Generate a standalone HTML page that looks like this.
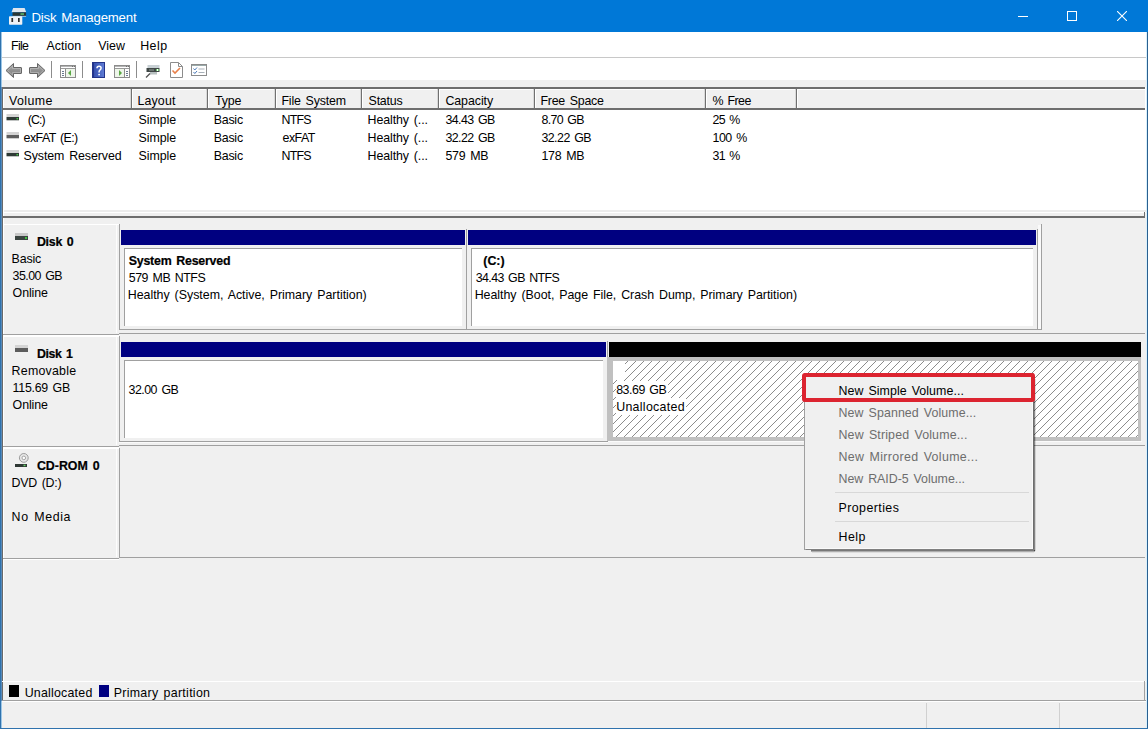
<!DOCTYPE html>
<html><head><meta charset="utf-8"><style>
html,body{margin:0;padding:0;width:1148px;height:729px;overflow:hidden;background:#f0f0f0}
body>div,body>svg{position:absolute}
.t{position:absolute;white-space:pre;font-family:"Liberation Sans",sans-serif;}
</style></head><body>
<div style="left:0px;top:0px;width:1148px;height:729px;background:#f0f0f0"></div>
<div style="left:0px;top:0px;width:1148px;height:32px;background:#0078d7"></div>
<div class="t" style="left:31.40px;top:11px;font-size:13.2px;line-height:13.2px;letter-spacing:-0.187px;word-spacing:1.5px;color:#ffffff;">Disk Management</div>
<svg style="left:9px;top:8px" width="19" height="18" viewBox="0 0 19 18">
<path d="M2.5 4.3 L4.2 0 H15.6 L17.2 4.3 Z" fill="#dfe6ee"/>
<rect x="3.5" y="4.3" width="13.6" height="3.6" fill="#2a3634"/>
<rect x="11.5" y="5.3" width="3.5" height="1.5" fill="#5cc070"/>
<rect x="3.5" y="7.9" width="13.6" height="0.8" fill="#bcd4ea"/>
<rect x="0" y="8.2" width="13.3" height="8.6" rx="0.8" fill="#eef1f5"/>
<rect x="2.4" y="10" width="1.7" height="4" fill="#2e2e2e"/>
<rect x="9" y="10" width="1.7" height="4" fill="#2e2e2e"/>
</svg>
<div style="left:1018px;top:16px;width:10px;height:1px;background:#fff"></div>
<div style="left:1067px;top:11px;width:8px;height:8px;border:1px solid #fff"></div>
<svg style="left:1117px;top:11px" width="10" height="10" viewBox="0 0 10 10"><path d="M0 0 L10 10 M10 0 L0 10" stroke="#fff" stroke-width="1.1"/></svg>
<div style="left:1px;top:32px;width:1146px;height:26px;background:#fff"></div>
<div style="left:1px;top:57px;width:1146px;height:1px;background:#c8c8c8"></div>
<div class="t" style="left:11.00px;top:40px;font-size:12.4px;line-height:12.4px;letter-spacing:-0.658px;color:#000;">File</div>
<div class="t" style="left:46.50px;top:40px;font-size:12.4px;line-height:12.4px;letter-spacing:0.051px;color:#000;">Action</div>
<div class="t" style="left:98.30px;top:40px;font-size:12.4px;line-height:12.4px;letter-spacing:0.005px;color:#000;">View</div>
<div class="t" style="left:140.20px;top:40px;font-size:12.4px;line-height:12.4px;letter-spacing:0.469px;color:#000;">Help</div>
<div style="left:1px;top:58px;width:1146px;height:22px;background:#fff"></div>
<div style="left:1px;top:80px;width:1146px;height:8px;background:#f0f0f0"></div>
<svg style="left:5px;top:62px" width="19" height="17" viewBox="0 0 19 17">
<defs><linearGradient id="ga" x1="0" y1="0" x2="0" y2="1"><stop offset="0" stop-color="#a8a8a8"/><stop offset="1" stop-color="#7a7a7a"/></linearGradient></defs>
<path d="M1 8.5 L8.5 1.5 V5.5 H16 Q16.5 5.5 16.5 6 V11 Q16.5 11.5 16 11.5 H8.5 V15.5 Z" fill="url(#ga)" stroke="#666" stroke-width="1"/>
<path d="M2.6 8.5 L7.5 4 V6.5 H15.5 V10.5 H7.5 V13 Z" fill="none" stroke="#c4c4c4" stroke-width="0.6"/>
</svg>
<svg style="left:28px;top:62px" width="19" height="17" viewBox="0 0 19 17">
<path d="M17 8.5 L9.5 1.5 V5.5 H2 Q1.5 5.5 1.5 6 V11 Q1.5 11.5 2 11.5 H9.5 V15.5 Z" fill="url(#ga)" stroke="#666" stroke-width="1"/>
<path d="M15.4 8.5 L10.5 4 V6.5 H2.5 V10.5 H10.5 V13 Z" fill="none" stroke="#c4c4c4" stroke-width="0.6"/>
</svg>
<div style="left:51px;top:61px;width:1px;height:17px;background:#8c8c8c"></div>
<div style="left:82px;top:61px;width:1px;height:17px;background:#8c8c8c"></div>
<div style="left:136px;top:61px;width:1px;height:17px;background:#8c8c8c"></div>
<svg style="left:59px;top:64px" width="18" height="15" viewBox="0 0 18 15" shape-rendering="crispEdges">
<rect x="1" y="1" width="16" height="13" fill="#8c8c8c"/>
<rect x="2" y="2" width="14" height="11" fill="#fff"/>
<rect x="2" y="2" width="14" height="1" fill="#b4b4b4"/>
<rect x="13" y="2" width="1" height="1" fill="#707070"/><rect x="15" y="2" width="1" height="1" fill="#707070"/>
<rect x="2" y="4" width="14" height="1" fill="#9a9a9a"/>
<rect x="6" y="5" width="1" height="8" fill="#8c8c8c"/>
<rect x="3" y="7" width="2" height="1" fill="#6a7a90"/><rect x="3" y="9" width="2" height="1" fill="#6a7a90"/><rect x="3" y="11" width="2" height="1" fill="#6a7a90"/>
<rect x="7" y="5" width="9" height="8" fill="#eef6ea"/>
<path d="M9 9 L12 6 V12 Z" fill="#5aa845" shape-rendering="auto"/>
</svg>
<svg style="left:92px;top:62px" width="13" height="16" viewBox="0 0 13 16">
<defs><linearGradient id="gh" x1="0" y1="0" x2="1" y2="0"><stop offset="0" stop-color="#3048a8"/><stop offset="1" stop-color="#6280d8"/></linearGradient></defs>
<rect x="0" y="0" width="13" height="16" fill="url(#gh)"/>
<rect x="0" y="0" width="2" height="16" fill="#22338c"/>
<rect x="0.5" y="0.5" width="12" height="15" fill="none" stroke="#24348a" stroke-width="1"/>
<path d="M5 6.2 Q5 4.2 7.1 4.2 Q9.1 4.2 9.1 6.1 Q9.1 7.4 7.9 8.1 Q7.1 8.6 7.1 9.8 V10.6" fill="none" stroke="#fff" stroke-width="1.5"/>
<circle cx="7.1" cy="12.6" r="0.95" fill="#fff"/>
</svg>
<svg style="left:113px;top:64px" width="18" height="15" viewBox="0 0 18 15" shape-rendering="crispEdges">
<rect x="1" y="1" width="16" height="13" fill="#8c8c8c"/>
<rect x="2" y="2" width="14" height="11" fill="#fff"/>
<rect x="2" y="2" width="14" height="1" fill="#b4b4b4"/>
<rect x="13" y="2" width="1" height="1" fill="#707070"/><rect x="15" y="2" width="1" height="1" fill="#707070"/>
<rect x="2" y="4" width="14" height="1" fill="#9a9a9a"/>
<rect x="11" y="5" width="1" height="8" fill="#8c8c8c"/>
<rect x="13" y="7" width="2" height="1" fill="#6a7a90"/><rect x="13" y="9" width="2" height="1" fill="#6a7a90"/><rect x="13" y="11" width="2" height="1" fill="#6a7a90"/>
<rect x="2" y="5" width="9" height="8" fill="#eef6ea"/>
<path d="M9 9 L6 6 V12 Z" fill="#5aa845" shape-rendering="auto"/>
</svg>
<svg style="left:145px;top:64px" width="16" height="14" viewBox="0 0 16 14">
<rect x="2.5" y="1" width="12" height="3" fill="#c8d0d4"/>
<rect x="1.5" y="4" width="13" height="4" fill="#404846"/>
<rect x="4" y="5" width="5" height="2" fill="#6a7270"/>
<rect x="11" y="5" width="3" height="2" fill="#6ac86a"/>
<rect x="12" y="5" width="1" height="2" fill="#fff"/>
<rect x="5" y="8" width="7" height="2.5" fill="#b8c0c0"/>
<path d="M5 9.5 L1 13.5" stroke="#505050" stroke-width="1.3"/>
</svg>
<svg style="left:170px;top:62px" width="13" height="16" viewBox="0 0 13 16">
<path d="M0.5 0.5 H8.5 L12.5 4.5 V15.5 H0.5 Z" fill="#fff" stroke="#8c8c8c"/>
<path d="M8.5 0.5 V4.5 H12.5" fill="none" stroke="#8c8c8c"/>
<path d="M2.5 8.5 L5 11 L10 6" fill="none" stroke="#e8804a" stroke-width="1.6"/>
</svg>
<svg style="left:191px;top:64px" width="16" height="12" viewBox="0 0 16 12">
<rect x="0.5" y="0.5" width="15" height="11" fill="#fff" stroke="#8c8c8c"/>
<rect x="1" y="1" width="14" height="1" fill="#9aa"/>
<path d="M2.5 4.5 L3.8 6 L6 3.5 M2.5 8 L3.8 9.5 L6 7" fill="none" stroke="#4a7ab8" stroke-width="1"/>
<rect x="7.5" y="4.5" width="6" height="1" fill="#a8b0b8"/><rect x="7.5" y="8" width="6" height="1" fill="#a8b0b8"/>
</svg>
<div style="left:2px;top:87px;width:1144px;height:126px;background:#fff"></div>
<div style="left:2px;top:87px;width:1143px;height:2px;background:#6e6e6e"></div>
<div style="left:2px;top:87px;width:1px;height:126px;background:#6a6a6a"></div>
<div style="left:3px;top:89px;width:1142px;height:19px;background:#f0f0f0"></div>
<div style="left:3px;top:89px;width:1142px;height:1px;background:#fff"></div>
<div style="left:3px;top:108px;width:1142px;height:2px;background:#6e6e6e"></div>
<div style="left:130px;top:89px;width:1px;height:19px;background:#d8d8d8"></div>
<div style="left:131px;top:89px;width:1px;height:19px;background:#707070"></div>
<div style="left:132px;top:89px;width:1px;height:19px;background:#fff"></div>
<div style="left:206px;top:89px;width:1px;height:19px;background:#d8d8d8"></div>
<div style="left:207px;top:89px;width:1px;height:19px;background:#707070"></div>
<div style="left:208px;top:89px;width:1px;height:19px;background:#fff"></div>
<div style="left:274px;top:89px;width:1px;height:19px;background:#d8d8d8"></div>
<div style="left:275px;top:89px;width:1px;height:19px;background:#707070"></div>
<div style="left:276px;top:89px;width:1px;height:19px;background:#fff"></div>
<div style="left:360px;top:89px;width:1px;height:19px;background:#d8d8d8"></div>
<div style="left:361px;top:89px;width:1px;height:19px;background:#707070"></div>
<div style="left:362px;top:89px;width:1px;height:19px;background:#fff"></div>
<div style="left:437px;top:89px;width:1px;height:19px;background:#d8d8d8"></div>
<div style="left:438px;top:89px;width:1px;height:19px;background:#707070"></div>
<div style="left:439px;top:89px;width:1px;height:19px;background:#fff"></div>
<div style="left:533px;top:89px;width:1px;height:19px;background:#d8d8d8"></div>
<div style="left:534px;top:89px;width:1px;height:19px;background:#707070"></div>
<div style="left:535px;top:89px;width:1px;height:19px;background:#fff"></div>
<div style="left:704px;top:89px;width:1px;height:19px;background:#d8d8d8"></div>
<div style="left:705px;top:89px;width:1px;height:19px;background:#707070"></div>
<div style="left:706px;top:89px;width:1px;height:19px;background:#fff"></div>
<div style="left:795px;top:89px;width:1px;height:19px;background:#d8d8d8"></div>
<div style="left:796px;top:89px;width:1px;height:19px;background:#707070"></div>
<div style="left:797px;top:89px;width:1px;height:19px;background:#fff"></div>
<div style="left:3px;top:89px;width:1px;height:19px;background:#fff"></div>
<div class="t" style="left:9.10px;top:95px;font-size:12.4px;line-height:12.4px;letter-spacing:0.373px;color:#000;">Volume</div>
<div class="t" style="left:137.40px;top:95px;font-size:12.4px;line-height:12.4px;letter-spacing:0.168px;color:#000;">Layout</div>
<div class="t" style="left:215.00px;top:95px;font-size:12.4px;line-height:12.4px;letter-spacing:-0.157px;color:#000;">Type</div>
<div class="t" style="left:281.40px;top:95px;font-size:12.4px;line-height:12.4px;letter-spacing:-0.150px;word-spacing:1.5px;color:#000;">File System</div>
<div class="t" style="left:368.60px;top:95px;font-size:12.4px;line-height:12.4px;letter-spacing:-0.226px;color:#000;">Status</div>
<div class="t" style="left:445.40px;top:95px;font-size:12.4px;line-height:12.4px;letter-spacing:-0.059px;color:#000;">Capacity</div>
<div class="t" style="left:540.40px;top:95px;font-size:12.4px;line-height:12.4px;letter-spacing:-0.218px;word-spacing:1.5px;color:#000;">Free Space</div>
<div class="t" style="left:712.60px;top:95px;font-size:12.4px;line-height:12.4px;letter-spacing:-0.549px;word-spacing:1.5px;color:#000;">% Free</div>
<svg style="left:6px;top:114px" width="13" height="7" viewBox="0 0 13 7"><rect x="0.5" y="0" width="12.5" height="3" fill="#d4d4d4"/><rect x="0.5" y="3" width="12.5" height="3.3" fill="#2f3a36"/><rect x="10.5" y="4" width="1.6" height="1.4" fill="#48c848"/></svg>
<div class="t" style="left:27.80px;top:114px;font-size:12.4px;line-height:12.4px;letter-spacing:-0.972px;color:#000;">(C:)</div>
<div class="t" style="left:138.40px;top:114px;font-size:12.4px;line-height:12.4px;color:#000;">Simple</div>
<div class="t" style="left:213.70px;top:114px;font-size:12.4px;line-height:12.4px;letter-spacing:-0.226px;color:#000;">Basic</div>
<div class="t" style="left:281.60px;top:114px;font-size:12.4px;line-height:12.4px;letter-spacing:-0.795px;color:#000;">NTFS</div>
<div class="t" style="left:367.60px;top:114px;font-size:12.4px;line-height:12.4px;letter-spacing:-0.097px;word-spacing:1.5px;color:#000;">Healthy (...</div>
<div class="t" style="left:445.40px;top:114px;font-size:12.4px;line-height:12.4px;letter-spacing:-0.570px;word-spacing:1.5px;color:#000;">34.43 GB</div>
<div class="t" style="left:541.40px;top:114px;font-size:12.4px;line-height:12.4px;letter-spacing:-0.633px;word-spacing:1.5px;color:#000;">8.70 GB</div>
<div class="t" style="left:712.60px;top:114px;font-size:12.4px;line-height:12.4px;letter-spacing:-0.675px;word-spacing:1.5px;color:#000;">25 %</div>
<svg style="left:6px;top:132px" width="13" height="7" viewBox="0 0 13 7"><rect x="0.5" y="0" width="12.5" height="3" fill="#d4d4d4"/><rect x="0.5" y="3" width="12.5" height="3.3" fill="#5e5e5e"/></svg>
<div class="t" style="left:23.60px;top:132px;font-size:12.4px;line-height:12.4px;letter-spacing:-0.551px;word-spacing:1.5px;color:#000;">exFAT (E:)</div>
<div class="t" style="left:138.40px;top:132px;font-size:12.4px;line-height:12.4px;color:#000;">Simple</div>
<div class="t" style="left:213.70px;top:132px;font-size:12.4px;line-height:12.4px;letter-spacing:-0.226px;color:#000;">Basic</div>
<div class="t" style="left:282.60px;top:132px;font-size:12.4px;line-height:12.4px;letter-spacing:-0.554px;color:#000;">exFAT</div>
<div class="t" style="left:367.60px;top:132px;font-size:12.4px;line-height:12.4px;letter-spacing:-0.097px;word-spacing:1.5px;color:#000;">Healthy (...</div>
<div class="t" style="left:445.40px;top:132px;font-size:12.4px;line-height:12.4px;letter-spacing:-0.570px;word-spacing:1.5px;color:#000;">32.22 GB</div>
<div class="t" style="left:541.40px;top:132px;font-size:12.4px;line-height:12.4px;letter-spacing:-0.527px;word-spacing:1.5px;color:#000;">32.22 GB</div>
<div class="t" style="left:712.60px;top:132px;font-size:12.4px;line-height:12.4px;letter-spacing:-0.504px;word-spacing:1.5px;color:#000;">100 %</div>
<svg style="left:6px;top:150px" width="13" height="7" viewBox="0 0 13 7"><rect x="0.5" y="0" width="12.5" height="3" fill="#d4d4d4"/><rect x="0.5" y="3" width="12.5" height="3.3" fill="#2f3a36"/><rect x="10.5" y="4" width="1.6" height="1.4" fill="#48c848"/></svg>
<div class="t" style="left:23.60px;top:150px;font-size:12.4px;line-height:12.4px;letter-spacing:-0.092px;word-spacing:1.5px;color:#000;">System Reserved</div>
<div class="t" style="left:138.40px;top:150px;font-size:12.4px;line-height:12.4px;color:#000;">Simple</div>
<div class="t" style="left:213.70px;top:150px;font-size:12.4px;line-height:12.4px;letter-spacing:-0.226px;color:#000;">Basic</div>
<div class="t" style="left:281.60px;top:150px;font-size:12.4px;line-height:12.4px;letter-spacing:-0.795px;color:#000;">NTFS</div>
<div class="t" style="left:367.60px;top:150px;font-size:12.4px;line-height:12.4px;letter-spacing:-0.097px;word-spacing:1.5px;color:#000;">Healthy (...</div>
<div class="t" style="left:445.40px;top:150px;font-size:12.4px;line-height:12.4px;letter-spacing:-0.207px;word-spacing:1.5px;color:#000;">579 MB</div>
<div class="t" style="left:541.40px;top:150px;font-size:12.4px;line-height:12.4px;letter-spacing:-0.207px;word-spacing:1.5px;color:#000;">178 MB</div>
<div class="t" style="left:712.60px;top:150px;font-size:12.4px;line-height:12.4px;letter-spacing:-0.675px;word-spacing:1.5px;color:#000;">31 %</div>
<div style="left:2px;top:210px;width:1144px;height:2px;background:#ececec"></div>
<div style="left:2px;top:212px;width:1144px;height:1px;background:#fff"></div>
<div style="left:2px;top:213px;width:1144px;height:3px;background:#f0f0f0"></div>
<div style="left:2px;top:87px;width:1px;height:130px;background:#6a6a6a"></div>
<div style="left:3px;top:110px;width:1px;height:106px;background:#fff"></div>
<div style="left:2px;top:216px;width:1144px;height:485px;background:#f0f0f0"></div>
<div style="left:2px;top:216px;width:1143px;height:2px;background:#6e6e6e"></div>
<div style="left:1144px;top:212px;width:1px;height:5px;background:#6e6e6e"></div>
<div style="left:2px;top:216px;width:1px;height:485px;background:#6a6a6a"></div>
<div style="left:3px;top:218px;width:1px;height:463px;background:#fff"></div>
<div style="left:3px;top:224px;width:116px;height:1px;background:#fff"></div>
<div style="left:119px;top:224px;width:1px;height:105px;background:#a0a0a0"></div>
<div style="left:3px;top:334px;width:116px;height:1px;background:#a0a0a0"></div>
<div style="left:3px;top:335px;width:116px;height:1px;background:#fff"></div>
<div style="left:119px;top:333px;width:1026px;height:1px;background:#a0a0a0"></div>
<div style="left:116px;top:225px;width:1px;height:108px;background:#fcfcfc"></div>
<div style="left:3px;top:336px;width:116px;height:1px;background:#fff"></div>
<div style="left:119px;top:336px;width:1px;height:105px;background:#a0a0a0"></div>
<div style="left:3px;top:446px;width:116px;height:1px;background:#a0a0a0"></div>
<div style="left:3px;top:447px;width:116px;height:1px;background:#fff"></div>
<div style="left:119px;top:445px;width:1026px;height:1px;background:#a0a0a0"></div>
<div style="left:116px;top:337px;width:1px;height:108px;background:#fcfcfc"></div>
<div style="left:3px;top:448px;width:116px;height:1px;background:#fff"></div>
<div style="left:119px;top:448px;width:1px;height:105px;background:#a0a0a0"></div>
<div style="left:3px;top:558px;width:116px;height:1px;background:#a0a0a0"></div>
<div style="left:3px;top:559px;width:116px;height:1px;background:#fff"></div>
<div style="left:119px;top:557px;width:1026px;height:1px;background:#a0a0a0"></div>
<div style="left:116px;top:449px;width:1px;height:108px;background:#fcfcfc"></div>
<div style="left:121px;top:230px;width:344px;height:15px;background:#000080"></div>
<div style="left:124px;top:248px;width:338px;height:78px;background:#fff;border-left:1px solid #a0a0a0;border-top:1px solid #a0a0a0;box-sizing:border-box"></div>
<div style="left:466px;top:229px;width:1px;height:100px;background:#a0a0a0"></div>
<div style="left:468px;top:230px;width:568px;height:15px;background:#000080"></div>
<div style="left:471px;top:248px;width:562px;height:78px;background:#fff;border-left:1px solid #a0a0a0;border-top:1px solid #a0a0a0;box-sizing:border-box"></div>
<div style="left:1037px;top:229px;width:1px;height:100px;background:#a0a0a0"></div>
<div style="left:1041px;top:224px;width:1px;height:105px;background:#a0a0a0"></div>
<div style="left:1038px;top:225px;width:3px;height:104px;background:#fafafa"></div>
<div style="left:119px;top:329px;width:923px;height:1px;background:#a0a0a0"></div>
<div style="left:121px;top:342px;width:485px;height:15px;background:#000080"></div>
<div style="left:124px;top:360px;width:479px;height:78px;background:#fff;border-left:1px solid #a0a0a0;border-top:1px solid #a0a0a0;box-sizing:border-box"></div>
<div style="left:607px;top:341px;width:1px;height:100px;background:#a0a0a0"></div>
<div style="left:609px;top:342px;width:532px;height:15px;background:#000"></div>
<div style="left:607px;top:357px;width:534px;height:84px;background:#c0c0c0"></div>
<svg style="left:613px;top:361px" width="525" height="76"><defs><pattern id="hp" patternUnits="userSpaceOnUse" width="8" height="8"><rect width="8" height="8" fill="#fff"/><g fill="#8c8c8c"><rect x="0" y="6" width="1" height="1"/><rect x="1" y="5" width="1" height="1"/><rect x="2" y="4" width="1" height="1"/><rect x="3" y="3" width="1" height="1"/><rect x="4" y="2" width="1" height="1"/><rect x="5" y="1" width="1" height="1"/><rect x="6" y="0" width="1" height="1"/><rect x="7" y="7" width="1" height="1"/></g></pattern></defs><rect width="525" height="76" fill="url(#hp)"/></svg>
<div style="left:119px;top:441px;width:489px;height:1px;background:#a0a0a0"></div>
<div style="left:119px;top:442px;width:489px;height:1px;background:#fafafa"></div>
<div style="left:608px;top:441px;width:534px;height:1px;background:#fafafa"></div>
<svg style="left:15px;top:232.8px" width="13" height="7" viewBox="0 0 13 7"><rect x="0" y="0" width="13" height="3" fill="#c8c8c8"/><rect x="0" y="3" width="13" height="4" fill="#3a4440"/><rect x="10" y="4" width="2" height="2" fill="#40c040"/></svg>
<div class="t" style="left:36.90px;top:236px;font-size:12.4px;line-height:12.4px;font-weight:bold;-webkit-text-stroke:0.2px currentColor;letter-spacing:-0.243px;word-spacing:1.5px;color:#000;">Disk 0</div>
<div class="t" style="left:11.60px;top:253px;font-size:12.4px;line-height:12.4px;letter-spacing:-0.176px;color:#000;">Basic</div>
<div class="t" style="left:12.60px;top:270px;font-size:12.4px;line-height:12.4px;letter-spacing:-0.555px;word-spacing:1.5px;color:#000;">35.00 GB</div>
<div class="t" style="left:12.60px;top:287px;font-size:12.4px;line-height:12.4px;letter-spacing:-0.085px;color:#000;">Online</div>
<svg style="left:15px;top:344.8px" width="13" height="7" viewBox="0 0 13 7"><rect x="0" y="0" width="13" height="3" fill="#d4d4d4"/><rect x="0" y="3" width="13" height="4" fill="#5c5c5c"/></svg>
<div class="t" style="left:36.90px;top:348px;font-size:12.4px;line-height:12.4px;font-weight:bold;-webkit-text-stroke:0.2px currentColor;letter-spacing:-0.383px;word-spacing:1.5px;color:#000;">Disk 1</div>
<div class="t" style="left:11.60px;top:365px;font-size:12.4px;line-height:12.4px;letter-spacing:0.227px;color:#000;">Removable</div>
<div class="t" style="left:12.60px;top:382px;font-size:12.4px;line-height:12.4px;letter-spacing:-0.270px;word-spacing:1.5px;color:#000;">115.69 GB</div>
<div class="t" style="left:12.60px;top:399px;font-size:12.4px;line-height:12.4px;letter-spacing:-0.085px;color:#000;">Online</div>
<svg style="left:14px;top:452px" width="16" height="16" viewBox="0 0 16 16"><circle cx="9.8" cy="5.9" r="4.4" fill="#e6e6e6" stroke="#9c9c9c" stroke-width="1"/><circle cx="9.8" cy="5.9" r="1.8" fill="#fff" stroke="#a4a4a4" stroke-width="1"/><rect x="1" y="12" width="12" height="3" fill="#2e3834"/><rect x="9.5" y="12.7" width="2" height="1.5" fill="#66d066"/></svg>
<div class="t" style="left:36.90px;top:460px;font-size:12.4px;line-height:12.4px;font-weight:bold;-webkit-text-stroke:0.2px currentColor;letter-spacing:-0.010px;word-spacing:1.5px;color:#000;">CD-ROM 0</div>
<div class="t" style="left:11.60px;top:477px;font-size:12.4px;line-height:12.4px;letter-spacing:-0.260px;word-spacing:1.5px;color:#000;">DVD (D:)</div>
<div class="t" style="left:11.60px;top:511px;font-size:12.4px;line-height:12.4px;letter-spacing:0.609px;word-spacing:1.5px;color:#000;">No Media</div>
<div style="left:119px;top:448px;width:1px;height:109px;background:#a0a0a0"></div>
<div class="t" style="left:128.70px;top:255px;font-size:12.4px;line-height:12.4px;font-weight:bold;-webkit-text-stroke:0.2px currentColor;letter-spacing:-0.211px;word-spacing:1.5px;color:#000;">System Reserved</div>
<div class="t" style="left:128.70px;top:272px;font-size:12.4px;line-height:12.4px;letter-spacing:-0.443px;word-spacing:1.5px;color:#000;">579 MB NTFS</div>
<div class="t" style="left:127.70px;top:289px;font-size:12.4px;line-height:12.4px;letter-spacing:-0.009px;word-spacing:1.5px;color:#000;">Healthy (System, Active, Primary Partition)</div>
<div class="t" style="left:483.25px;top:255px;font-size:12.4px;line-height:12.4px;font-weight:bold;-webkit-text-stroke:0.2px currentColor;letter-spacing:0.017px;color:#000;">(C:)</div>
<div class="t" style="left:475.70px;top:272px;font-size:12.4px;line-height:12.4px;letter-spacing:-0.590px;word-spacing:1.5px;color:#000;">34.43 GB NTFS</div>
<div class="t" style="left:474.70px;top:289px;font-size:12.4px;line-height:12.4px;letter-spacing:-0.027px;word-spacing:1.5px;color:#000;">Healthy (Boot, Page File, Crash Dump, Primary Partition)</div>
<div class="t" style="left:128.50px;top:384px;font-size:12.4px;line-height:12.4px;letter-spacing:-0.512px;word-spacing:1.5px;color:#000;">32.00 GB</div>
<div style="left:613px;top:361px;width:12px;height:19px;background:#fff"></div>
<div style="left:616px;top:381px;width:52px;height:17px;background:#fff"></div>
<div style="left:616px;top:398px;width:70px;height:17px;background:#fff"></div>
<div class="t" style="left:616.20px;top:384px;font-size:12.4px;line-height:12.4px;letter-spacing:-0.470px;word-spacing:1.5px;color:#000;">83.69 GB</div>
<div class="t" style="left:616.20px;top:401px;font-size:12.4px;line-height:12.4px;letter-spacing:0.295px;color:#000;">Unallocated</div>
<div style="left:2px;top:681px;width:1144px;height:1px;background:#fff"></div>
<div style="left:2px;top:700px;width:1144px;height:1px;background:#a0a0a0"></div>
<div style="left:9px;top:685px;width:10px;height:12px;background:#000"></div>
<div class="t" style="left:24.70px;top:687px;font-size:12.4px;line-height:12.4px;letter-spacing:0.215px;color:#000;">Unallocated</div>
<div style="left:99px;top:685px;width:10px;height:12px;background:#000080"></div>
<div style="left:1144px;top:681px;width:1px;height:20px;background:#a0a0a0"></div>
<div class="t" style="left:113.70px;top:687px;font-size:12.4px;line-height:12.4px;letter-spacing:0.287px;word-spacing:1.5px;color:#000;">Primary partition</div>
<div style="left:1px;top:701px;width:1146px;height:27px;background:#f0f0f0"></div>
<div style="left:1px;top:701px;width:1146px;height:1px;background:#fff"></div>
<div style="left:926px;top:703px;width:1px;height:25px;background:#d0d0d0"></div>
<div style="left:1059px;top:703px;width:1px;height:25px;background:#d0d0d0"></div>
<div style="left:811px;top:550px;width:224px;height:1px;background:rgba(0,0,0,0.5)"></div>
<div style="left:811px;top:551px;width:224px;height:1px;background:rgba(0,0,0,0.28)"></div>
<div style="left:812px;top:552px;width:222px;height:1px;background:rgba(0,0,0,0.08)"></div>
<div style="left:1034px;top:378px;width:1px;height:173px;background:rgba(0,0,0,0.45)"></div>
<div style="left:1035px;top:379px;width:1px;height:172px;background:rgba(0,0,0,0.12)"></div>
<div style="left:804px;top:373px;width:230px;height:177px;background:#f0f0f0;border:1px solid #a0a0a0;box-sizing:border-box"></div>
<div style="left:1032px;top:378px;width:1px;height:171px;background:#fafafa"></div>
<div style="left:806px;top:548px;width:227px;height:1px;background:#fafafa"></div>
<div style="left:1033px;top:378px;width:1px;height:172px;background:#6e6e6e"></div>
<div style="left:806px;top:549px;width:228px;height:1px;background:#808080"></div>
<div class="t" style="left:838.50px;top:385px;font-size:12.4px;line-height:12.4px;letter-spacing:0.060px;word-spacing:1.5px;color:#000;">New Simple Volume...</div>
<div class="t" style="left:838.50px;top:407px;font-size:12.4px;line-height:12.4px;letter-spacing:0.090px;word-spacing:1.5px;color:#6d6d6d;">New Spanned Volume...</div>
<div class="t" style="left:838.50px;top:429px;font-size:12.4px;line-height:12.4px;letter-spacing:0.163px;word-spacing:1.5px;color:#6d6d6d;">New Striped Volume...</div>
<div class="t" style="left:838.50px;top:451px;font-size:12.4px;line-height:12.4px;letter-spacing:0.338px;word-spacing:1.5px;color:#6d6d6d;">New Mirrored Volume...</div>
<div class="t" style="left:838.50px;top:473px;font-size:12.4px;line-height:12.4px;letter-spacing:-0.021px;word-spacing:1.5px;color:#6d6d6d;">New RAID-5 Volume...</div>
<div class="t" style="left:838.50px;top:502px;font-size:12.4px;line-height:12.4px;letter-spacing:0.436px;color:#000;">Properties</div>
<div class="t" style="left:838.50px;top:531px;font-size:12.4px;line-height:12.4px;letter-spacing:0.503px;color:#000;">Help</div>
<div style="left:835px;top:492px;width:194px;height:1px;background:#d8d8d8"></div>
<div style="left:835px;top:521px;width:194px;height:1px;background:#d8d8d8"></div>
<div style="left:802px;top:373px;width:233px;height:29px;border:4px solid #dc2430;border-radius:3px;box-sizing:border-box"></div>
<div style="left:0px;top:32px;width:1px;height:697px;background:#2f72ad"></div>
<div style="left:1px;top:32px;width:1px;height:697px;background:#9cc6e6"></div>
<div style="left:1px;top:87px;width:1px;height:614px;background:#5a8ab8"></div>
<div style="left:1146px;top:32px;width:1px;height:697px;background:#d8f0fc"></div>
<div style="left:1147px;top:32px;width:1px;height:697px;background:#2a6090"></div>
<div style="left:0px;top:728px;width:1148px;height:1px;background:#2f72ad"></div>
</body></html>
